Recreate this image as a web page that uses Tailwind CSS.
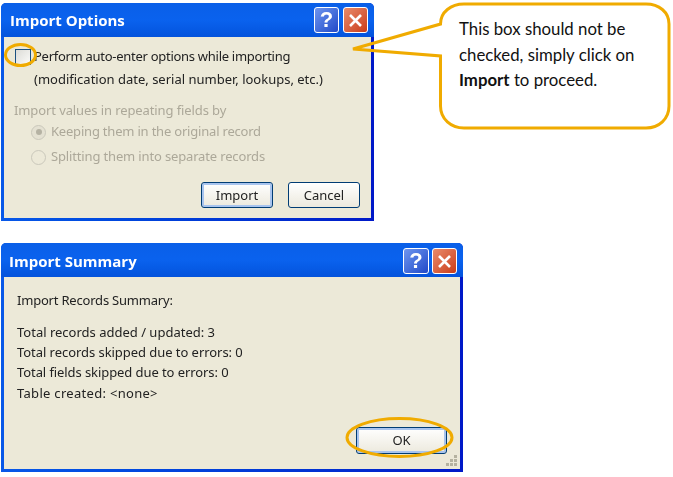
<!DOCTYPE html>
<html>
<head>
<meta charset="utf-8">
<script src="https://cdn.jsdelivr.net/npm/@tailwindcss/browser@4"></script>
</head>
<body class="bg-white">
<div class="relative w-[673px] h-[477px] overflow-hidden bg-white pl-px pt-[3px] font-['Noto_Sans',sans-serif] text-[13px] text-[#222]">

  <!-- Import Options -->
  <section class="w-[373px] h-[218px] flex flex-col rounded-t-[5px] overflow-hidden bg-linear-to-r from-[#0858e8] to-[#0018c8] blur-[0.4px]">
    <header class="h-[34px] shrink-0 flex items-center pl-[9px] pr-[6px] gap-[4px] bg-linear-to-b from-[#0a5fe8] via-[#0a62ee] to-[#0453dc]">
      <h1 class="flex-1 font-['Open_Sans',sans-serif] font-bold text-[15px] text-white leading-none">Import Options</h1>
      <span class="w-[25px] h-[26px] rounded-[3px] border border-white bg-linear-to-br from-[#6f95ee] to-[#2248c8] flex items-center justify-center text-white font-['Liberation_Sans',sans-serif] font-bold text-[22px] leading-none">?</span>
      <span class="w-[25px] h-[26px] rounded-[3px] border border-white bg-linear-to-br from-[#e98a6a] to-[#c93a14] flex items-center justify-center">
        <svg width="15" height="15" viewBox="0 0 15 15"><path d="M2 2 13 13M13 2 2 13" stroke="#fff" stroke-width="2.6"/></svg>
      </span>
    </header>
    <div class="flex-1 mx-[3px] mb-[3px] bg-[#ece9d8] pl-[11px] pr-[11px] flex flex-col">
      <div class="h-[24px] mt-[8px] flex items-center gap-[3px]">
        <span class="w-[16px] h-[16px] border border-[#1c5180] bg-linear-to-br from-[#dcdcd7] to-[#fbfbf9] shrink-0"></span>
        <span class="tracking-[-0.28px]">Perform auto-enter options while importing</span>
      </div>
      <div class="h-[22px] pl-[19px] flex items-center">(modification date, serial number, lookups, etc.)</div>
      <div class="h-[22px] mt-[9px] -ml-px flex items-center text-[#aca899] tracking-[-0.1px]">Import values in repeating fields by</div>
      <div class="h-[24px] mt-[-2px] pl-[16px] flex items-center gap-[5px] text-[#aca899] tracking-[-0.2px]">
        <span class="w-[15px] h-[15px] rounded-full border border-[#cac8bb] bg-[#e4e1d2] flex items-center justify-center shrink-0"><span class="w-[6px] h-[6px] rounded-full bg-[#b5b2a3]"></span></span>
        <span>Keeping them in the original record</span>
      </div>
      <div class="h-[24px] mt-px pl-[16px] flex items-center gap-[5px] text-[#aca899] tracking-[-0.15px]">
        <span class="w-[15px] h-[15px] rounded-full border border-[#cac8bb] shrink-0"></span>
        <span>Splitting them into separate records</span>
      </div>
      <div class="flex justify-end gap-[15px] mt-[13px]">
        <button class="w-[72px] h-[26px] pt-px rounded-[3px] border border-[#003c74] shadow-[inset_0_0_0_2px_#a8c4ee] bg-linear-to-b from-white to-[#ece9dd] text-[13px] text-[#222]">Import</button>
        <button class="w-[72px] h-[26px] pt-px rounded-[3px] border border-[#003c74] bg-linear-to-b from-white to-[#ece9dd] text-[13px] text-[#222]">Cancel</button>
      </div>
    </div>
  </section>

  <!-- Import Summary -->
  <section class="relative w-[462px] h-[229px] mt-[22px] flex flex-col rounded-t-[5px] overflow-hidden bg-linear-to-r from-[#0858e8] to-[#0018c8] blur-[0.4px]">
    <header class="h-[34px] shrink-0 flex items-center pt-[2px] pl-[8px] pr-[5px] gap-[3px] bg-linear-to-b from-[#0a5fe8] via-[#0a62ee] to-[#0453dc]">
      <h1 class="flex-1 font-['Open_Sans',sans-serif] font-bold text-[15px] text-white leading-none">Import Summary</h1>
      <span class="w-[26px] h-[26px] rounded-[3px] border border-white bg-linear-to-br from-[#6f95ee] to-[#2248c8] flex items-center justify-center text-white font-['Liberation_Sans',sans-serif] font-bold text-[22px] leading-none">?</span>
      <span class="w-[25px] h-[26px] mr-px rounded-[3px] border border-white bg-linear-to-br from-[#e98a6a] to-[#c93a14] flex items-center justify-center">
        <svg width="15" height="15" viewBox="0 0 15 15"><path d="M2 2 13 13M13 2 2 13" stroke="#fff" stroke-width="2.6"/></svg>
      </span>
    </header>
    <div class="relative flex-1 mx-[3px] mb-[3px] bg-[#ece9d8] pl-[13px] pt-[14px] flex flex-col">
      <p class="h-[20px] flex items-center tracking-[-0.2px]">Import Records Summary:</p>
      <p class="h-[20px] mt-[12px] flex items-center">Total records added / updated: 3</p>
      <p class="h-[20px] flex items-center tracking-[-0.05px]">Total records skipped due to errors: 0</p>
      <p class="h-[20px] flex items-center tracking-[-0.08px]">Total fields skipped due to errors: 0</p>
      <p class="h-[20px] mt-px flex items-center tracking-[0.3px]">Table created: &lt;none&gt;</p>
      <div class="flex justify-end mt-[23px] pr-[13px]">
        <button class="w-[91px] h-[27px] rounded-[3px] border border-[#003c74] shadow-[inset_0_0_0_2px_#a8c4ee] bg-linear-to-b from-white to-[#ece9dd] text-[13px] text-[#222]">OK</button>
      </div>
      <svg class="absolute right-[2px] bottom-[2px]" width="13" height="13" viewBox="0 0 13 13" fill="#b5b2a0"><rect x="9" y="1" width="3" height="3"/><rect x="5" y="5" width="3" height="3"/><rect x="9" y="5" width="3" height="3"/><rect x="1" y="9" width="3" height="3"/><rect x="5" y="9" width="3" height="3"/><rect x="9" y="9" width="3" height="3"/></svg>
    </div>
  </section>

  <!-- Annotation overlay -->
  <svg class="absolute inset-0 pointer-events-none" width="673" height="477" viewBox="0 0 673 477" fill="none" stroke="#f0ab00" stroke-width="3">
    <path fill="#fff" stroke="none" d="M375 42.7 440.5 24C440.5 12 451 4 464 4H646C659 4 669 12 669 24V106C669 119 659 128 646 128H464C451 128 440.5 119 440.5 106V56L375 50.8Z"/>
    <path d="M353 49 440.5 24C440.5 12 451 4 464 4H646C659 4 669 12 669 24V106C669 119 659 128 646 128H464C451 128 440.5 119 440.5 106V56Z"/>
    <ellipse cx="20.5" cy="55" rx="15" ry="10.5"/>
    <ellipse cx="399.5" cy="437.5" rx="52.5" ry="19"/>
  </svg>
  <div class="absolute left-[459px] top-[16px] w-[205px] font-['Lato',sans-serif] text-[16.8px] leading-[25.5px] text-[#111]">
    This box should not be<br>checked, simply click on<br><b>Import</b> to proceed.
  </div>
</div>
</body>
</html>
